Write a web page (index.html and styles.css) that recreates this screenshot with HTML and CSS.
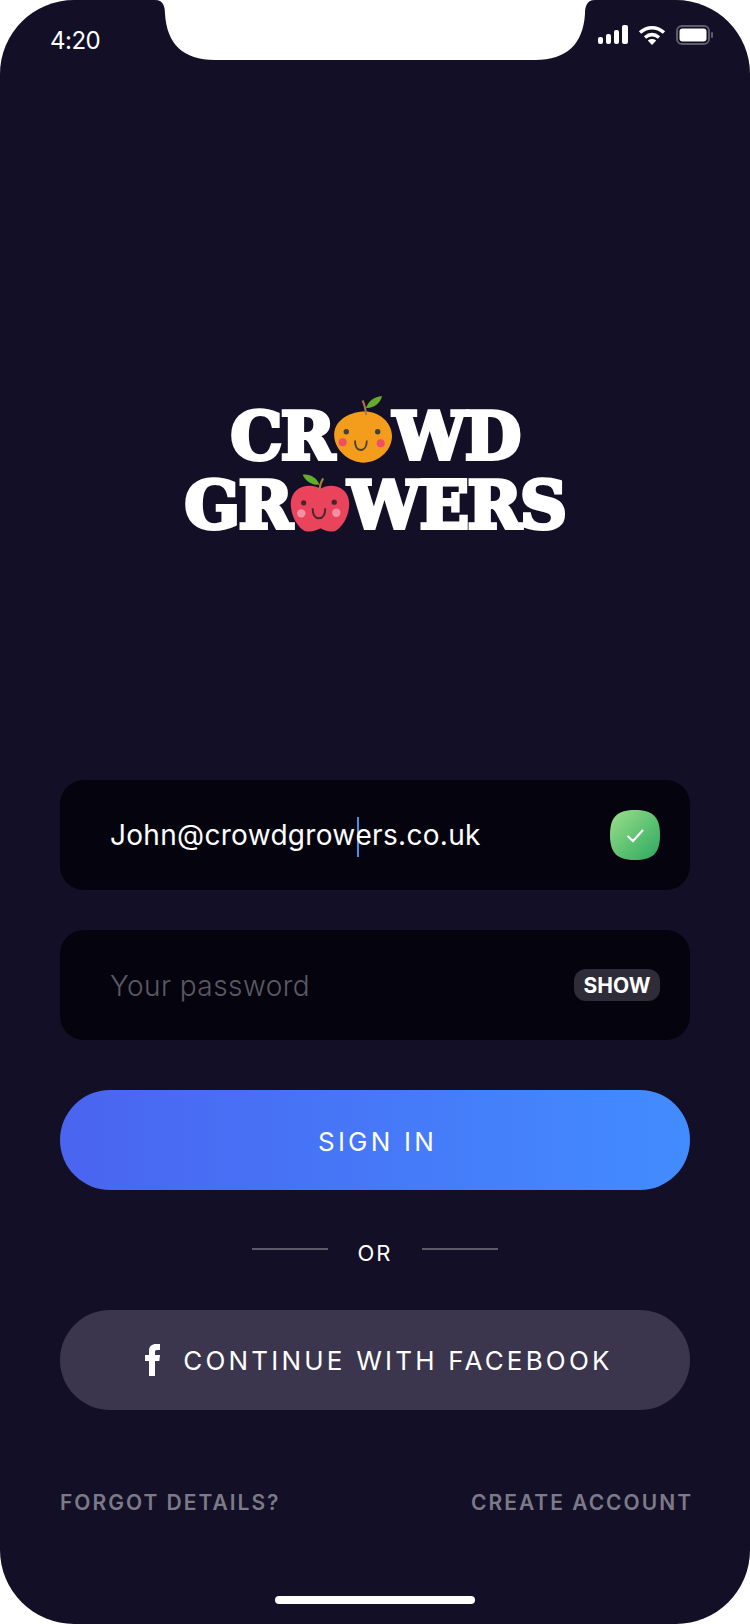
FILE: index.html
```html
<!DOCTYPE html>
<html lang="en">

<head>
    <meta charset="UTF-8">
    <meta name="viewport" content="width=device-width, initial-scale=1.0">
    <title>Crowd Growers</title>
    <link rel="stylesheet" href="styles.css">
</head>
<body>
    <main class="phone">
        <!-- notch sits over the top of the screen -->
        <svg class="notch" width="440" height="60" viewBox="0 0 440 60">
            <path d="M0 0H440C431 0 430 8 430 14C428 44 412 60 380 60H60C28 60 12 44 10 14C10 8 9 0 0 0Z" fill="#fff"/>
        </svg>

        <header class="statusBar">
            <span class="time">4:20</span>
            <div class="statusIcons">
                <svg width="30" height="19" viewBox="0 0 30 19">
                    <rect x="0" y="12" width="5" height="7" rx="2" fill="#fff"/>
                    <rect x="8" y="9" width="5" height="10" rx="2" fill="#fff"/>
                    <rect x="16" y="5" width="5" height="14" rx="2" fill="#fff"/>
                    <rect x="24" y="0" width="6" height="19" rx="2" fill="#fff"/>
                </svg>
                <svg width="28" height="20" viewBox="0 0 28 20">
                    <path d="M2 7.5C9.500 1 18.500 1 26 7.500" fill="none" stroke="#fff" stroke-width="3.500"/>
                    <path d="M7 12.500C11.500 8.800 16.500 8.800 21 12.500" fill="none" stroke="#fff" stroke-width="3.500"/>
                    <path d="M9.800 15.500C12.500 13.600 15.500 13.600 18.200 15.500L14 20Z" fill="#fff"/>
                </svg>
                <svg width="38" height="20" viewBox="0 0 38 20">
                    <rect x="1" y="1" width="32" height="18" rx="5" fill="none" stroke="#5f5c6b" stroke-width="2"/>
                    <rect x="3.500" y="3.500" width="27" height="13" rx="3" fill="#fff"/>
                    <rect x="35" y="7" width="2" height="6" rx="1" fill="#5f5c6b"/>
                </svg>
            </div>
        </header>

        <div class="logo">
            <div class="logoLine">
                <span>CR</span>
                <svg class="orange" width="60" height="72" viewBox="11 2 60 72">
                    <path d="M41 21.500C55 20.500 70 31 70 46C70 60 58 71 44 72.500C30 74 13 62 12.200 46C11.500 31 26 22.500 41 21.500Z" fill="#f49d1c"/>
                    <path d="M44 25C43.600 19 42.600 14.500 40.500 10.500" fill="none" stroke="#a87b3c" stroke-width="2"/>
                    <path d="M44 18C47 10 52 7 60 6C58.500 13 52 18.500 44 18Z" fill="#65ab2e"/>
                    <circle cx="24.300" cy="41.700" r="2.700" fill="#41403f"/>
                    <circle cx="55.700" cy="41.700" r="2.700" fill="#41403f"/>
                    <circle cx="20.700" cy="52.300" r="4" fill="#ef4f64"/>
                    <circle cx="58.700" cy="53.300" r="4" fill="#ef4f64"/>
                    <path d="M33 50.500C33 56 35 60 38.800 60C42.600 60 44.800 56 44.800 50.500" fill="none" stroke="#41403f" stroke-width="1.800"/>
                </svg>
                <span>WD</span>
            </div>
            <div class="logoLine">
                <span>GR</span>
                <svg class="apple" width="60" height="60" viewBox="7 4 57 57">
                    <path d="M36 20C42 16 50 16 56 20C62 24 64 31 63 38C62 47 57 56 50 60C45 61.500 40 60 36 57.500C32 60 26 61.500 21 60C14 56 9 47 8 38C7 31 9 24 15 20C21 16 30 16 36 20Z" fill="#ea445d"/>
                    <path d="M35 21C35.500 16 36.500 13 38.500 10" fill="none" stroke="#a87b3c" stroke-width="2"/>
                    <path d="M19 6.500C26 5.500 32 9 35 16C28 16.500 22 13 19 6.500Z" fill="#65ab2e"/>
                    <circle cx="20" cy="33.300" r="2.500" fill="#41282e"/>
                    <circle cx="49" cy="32.700" r="2.500" fill="#41282e"/>
                    <circle cx="17.700" cy="43.300" r="4" fill="#f590a5"/>
                    <circle cx="51" cy="42.700" r="4" fill="#f590a5"/>
                    <path d="M28.500 38.500C28.500 44 30.500 48 34.500 48C38.500 48 40.500 44 40.500 38.500" fill="none" stroke="#41282e" stroke-width="1.800"/>
                </svg>
                <span>WERS</span>
            </div>
        </div>

        <form class="signInForm">
            <div class="campo">
                <span class="campoValor">John@crowdgrow<span class="cursor"></span>ers.co.uk</span>
                <svg class="checkBadge" width="50" height="50" viewBox="0 0 50 50">
                    <defs>
                        <linearGradient id="verde" x1="0" y1="0" x2="1" y2="1">
                            <stop offset="0" stop-color="#9be08a"/>
                            <stop offset="1" stop-color="#2ba85f"/>
                        </linearGradient>
                    </defs>
                    <path d="M25 0C42 0 50 6 50 25C50 44 42 50 25 50C8 50 0 44 0 25C0 6 8 0 25 0Z" fill="url(#verde)"/>
                    <path d="M17.500 26L23 31L33 20" fill="none" stroke="#fff" stroke-width="2"/>
                </svg>
            </div>
            <div class="campo">
                <span class="campoDica">Your password</span>
                <button type="button" class="btnShow">SHOW</button>
            </div>
            <button type="button" class="btn btnEntrar">SIGN IN</button>
            <div class="divisor"><span>OR</span></div>
            <button type="button" class="btn btnFacebook">
                <svg width="15" height="32" viewBox="0 0 15 32">
                    <path d="M4 32V17H0V11H4V7C4 2 7 0 11 0H15V6H12C10.500 6 10 6.800 10 8V11H15L14.300 17H10V32Z" fill="#fff"/>
                </svg>
                CONTINUE WITH FACEBOOK
            </button>
        </form>

        <nav class="links">
            <a>FORGOT DETAILS?</a>
            <a>CREATE ACCOUNT</a>
        </nav>

        <div class="homeBar"></div>
    </main>
</body>

</html>
```

FILE: styles.css
```css
* {
    margin: 0;
    padding: 0;
    box-sizing: border-box;
}

body {
    background-color: #fff;
    font-family: Inter, "Liberation Sans", sans-serif;
    width: 750px;
    height: 1624px;
    overflow: hidden;
}

.phone {
    background-color: #130f26;
    width: 750px;
    height: 1624px;
    border-radius: 74px;
    position: relative;
    display: flex;
    flex-direction: column;
    overflow: hidden;
}

.notch {
    position: absolute;
    top: 0;
    left: 155px;
}

.statusBar {
    height: 60px;
    padding: 26px 36px 0 50px;
    display: flex;
    justify-content: space-between;
    align-items: flex-start;
}

.time {
    color: #fff;
    font-size: 24px;
    line-height: 30px;
    letter-spacing: -0.5px;
}

.statusIcons {
    display: flex;
    align-items: flex-start;
    gap: 10px;
    margin-top: -1px;
}

.logo {
    margin-top: 342px;
    display: flex;
    flex-direction: column;
    align-items: center;
}

.logoLine {
    height: 69px;
    display: flex;
    align-items: flex-end;
    justify-content: center;
    color: #fff;
    font-family: "DejaVu Serif", serif;
    font-weight: 700;
    font-size: 65px;
    line-height: 69px;
    letter-spacing: -1.5px;
    -webkit-text-stroke: 4px #fff;
}

.orange {
    margin-bottom: 7px;
}

.apple {
    margin: 0 -2px 8px -1px;
}

.signInForm {
    margin-top: 240px;
    padding: 0 60px;
    display: flex;
    flex-direction: column;
}

.campo {
    background-color: #05040e;
    height: 110px;
    border-radius: 24px;
    margin-bottom: 40px;
    padding: 0 30px 0 50px;
    display: flex;
    align-items: center;
    justify-content: space-between;
    font-size: 28px;
}

.campoValor {
    color: #fff;
    letter-spacing: 0.3px;
    padding-top: 3px;
}

.cursor {
    display: inline-block;
    width: 2px;
    height: 40px;
    margin: 0 -4px 0 2px;
    vertical-align: middle;
    background-color: #4a90e2;
}

.campoDica {
    color: #5b5963;
    font-weight: 300;
    letter-spacing: 0.45px;
    padding-top: 1px;
}

.btnShow {
    background-color: #2e2c38;
    color: #fff;
    border: none;
    border-radius: 12px;
    width: 86px;
    height: 32px;
    font-family: inherit;
    font-size: 21px;
    font-weight: 700;
}

.btn {
    height: 100px;
    border: none;
    border-radius: 50px;
    color: #fff;
    font-family: inherit;
    font-size: 26px;
    letter-spacing: 3.2px;
    display: flex;
    align-items: center;
    justify-content: center;
}

.btnEntrar {
    margin-top: 10px;
    background: linear-gradient(90deg, #4a64f0, #428cff);
    padding: 2px 0 0 5px;
}

.btnFacebook {
    background-color: #3b364d;
    gap: 23px;
    padding-left: 8px;
}

.divisor {
    height: 120px;
    padding-top: 6px;
    display: flex;
    align-items: center;
    justify-content: center;
    gap: 30px;
    color: #fff;
    font-size: 22px;
    letter-spacing: 2px;
}

.divisor::before,
.divisor::after {
    content: "";
    width: 76px;
    height: 2px;
    background-color: #5c5a68;
    margin-bottom: 8px;
}

.links {
    margin-top: 80px;
    padding: 0 57px 0 60px;
    display: flex;
    justify-content: space-between;
    color: #7d7a88;
    font-size: 21px;
    font-weight: 600;
    letter-spacing: 2px;
}

.homeBar {
    margin: auto auto 20px;
    width: 200px;
    height: 8px;
    border-radius: 4px;
    background-color: #fff;
}
```
